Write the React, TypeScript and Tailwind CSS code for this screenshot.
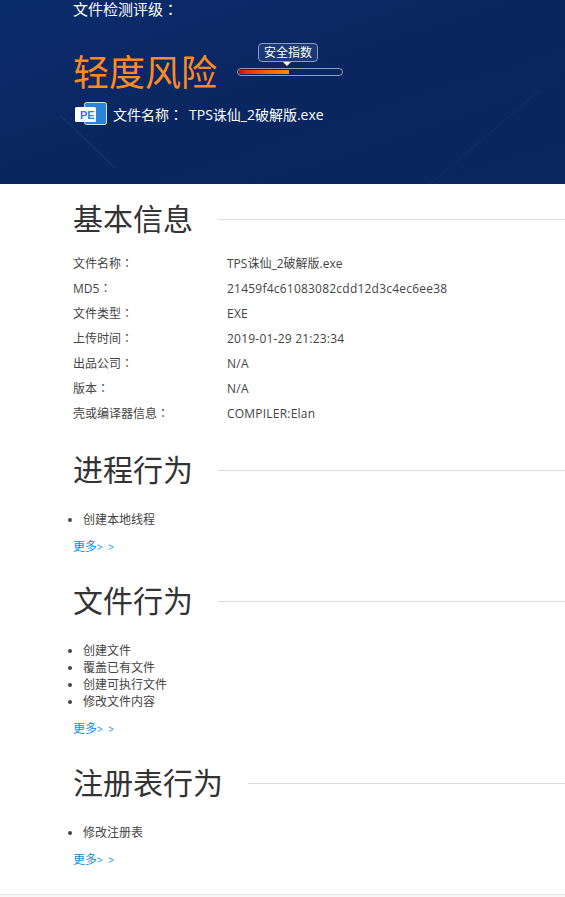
const font = "font-['Open_Sans','Liberation_Sans','Noto_Sans_CJK_SC',sans-serif]";

const basicInfo = [
  { label: "文件名称", value: "TPS诛仙_2破解版.exe", spaced: false },
  { label: "MD5", value: "21459f4c61083082cdd12d3c4ec6ee38", spaced: true },
  { label: "文件类型", value: "EXE", spaced: true },
  { label: "上传时间", value: "2019-01-29 21:23:34", spaced: true },
  { label: "出品公司", value: "N/A", spaced: true },
  { label: "版本", value: "N/A", spaced: true },
  { label: "壳或编译器信息", value: "COMPILER:Elan", spaced: true },
];

const behaviors = [
  { title: "进程行为", items: ["创建本地线程"], top: "mt-[24px]" },
  { title: "文件行为", items: ["创建文件", "覆盖已有文件", "创建可执行文件", "修改文件内容"], top: "mt-[25px]" },
  { title: "注册表行为", items: ["修改注册表"], top: "mt-[25px]" },
];

// centred full-width colon, the SC font puts it low on the left
function Colon() {
  return <span className="font-['Noto_Sans_CJK_TC',sans-serif]">：</span>;
}

function SectionTitle({ title }: { title: string }) {
  return (
    <div className="flex items-center h-[40px]">
      <h2 className="pl-[73px] text-[30px] leading-[40px] font-normal text-[#333] whitespace-nowrap">{title}</h2>
      <div className="flex-1 h-px bg-[#ddd] ml-[25px]" />
    </div>
  );
}

function PeIcon() {
  return (
    <svg width="32" height="24" viewBox="0 0 32 24" className="shrink-0">
      <rect x="9.5" y="0.5" width="22" height="22" rx="2" fill="#2a84dc" stroke="#cfe3f7" />
      <rect x="0" y="5" width="21" height="15" rx="1.5" fill="#ffffff" />
      <text x="5" y="17" fontSize="11" fontWeight="700" fill="#2a7fd6" fontFamily="'Liberation Sans', sans-serif">PE</text>
    </svg>
  );
}

export default function App() {
  return (
    <div className={`${font} bg-white h-[897px] overflow-hidden text-[#333]`}>
      {/* Header */}
      <div className="relative h-[184px] bg-gradient-to-br from-[#0b2c6b] via-[#0a2660] to-[#08285f] pl-[73px] text-white overflow-hidden">
        <svg className="absolute left-0 top-0" width="565" height="184">
          <line x1="60" y1="115" x2="115" y2="168" stroke="#1c4a8c" strokeOpacity="0.6" />
          <line x1="430" y1="184" x2="540" y2="90" stroke="#1c4a8c" strokeOpacity="0.25" />
        </svg>
        <div className="relative">
          <p className="text-[15px] leading-[18px]">文件检测评级<Colon /></p>
          <div className="flex mt-[26px]">
            <div className="text-[36px] leading-[58px] text-[#ff8a22] w-[164px] whitespace-nowrap">轻度风险</div>
            <div className="relative w-[106px] pt-[24px]">
              <div className="absolute left-[21px] -top-px h-[19px] w-[60px] rounded-[4px] border border-[#8b9cc0] bg-[#1a3a75] text-center text-[12px] leading-[17px] whitespace-nowrap">
                安全指数
                <span className="absolute left-[24px] top-[18px] border-x-[4px] border-t-[4px] border-x-transparent border-t-white" />
              </div>
              <div className="h-[8px] rounded-full border border-[#8b9cc0] p-px">
                <div className="h-full w-[50px] bg-gradient-to-r from-[#e00000] to-[#ff8c00]" />
              </div>
            </div>
          </div>
          <div className="flex items-center ml-[2px] h-[24px] gap-[6px] text-[14px] whitespace-nowrap">
            <PeIcon />
            <span>文件名称<Colon /></span>
            <span>TPS诛仙_2破解版.exe</span>
          </div>
        </div>
      </div>

      {/* Basic info */}
      <div className="mt-[15px]">
        <SectionTitle title="基本信息" />
        <dl className="mt-[12px] pl-[73px] text-[12px] text-[#444]">
          {basicInfo.map((row) => (
            <div key={row.label} className="flex h-[25px] items-center">
              <dt className="w-[154px]">{row.label}<Colon /></dt>
              <dd className={row.spaced ? "tracking-[0.22px]" : ""}>{row.value}</dd>
            </div>
          ))}
        </dl>
      </div>

      {/* Behaviors */}
      {behaviors.map((section) => (
        <section key={section.title} className={section.top}>
          <SectionTitle title={section.title} />
          <ul className="mt-[21px] pl-[83px] list-disc text-[12px] leading-[17px] text-[#444]">
            {section.items.map((item) => (
              <li key={item}>{item}</li>
            ))}
          </ul>
          <a href="#" className="block mt-[10px] pl-[73px] text-[12px] leading-[17px] text-[#0a8fe8]">
            更多<span className="tracking-[1.5px] text-[10px]">&gt; &gt;</span>
          </a>
        </section>
      ))}

      <div className="mt-[25px] h-[6px] border-t border-[#e5e5e5] bg-[#f8f8f8]" />
    </div>
  );
}
